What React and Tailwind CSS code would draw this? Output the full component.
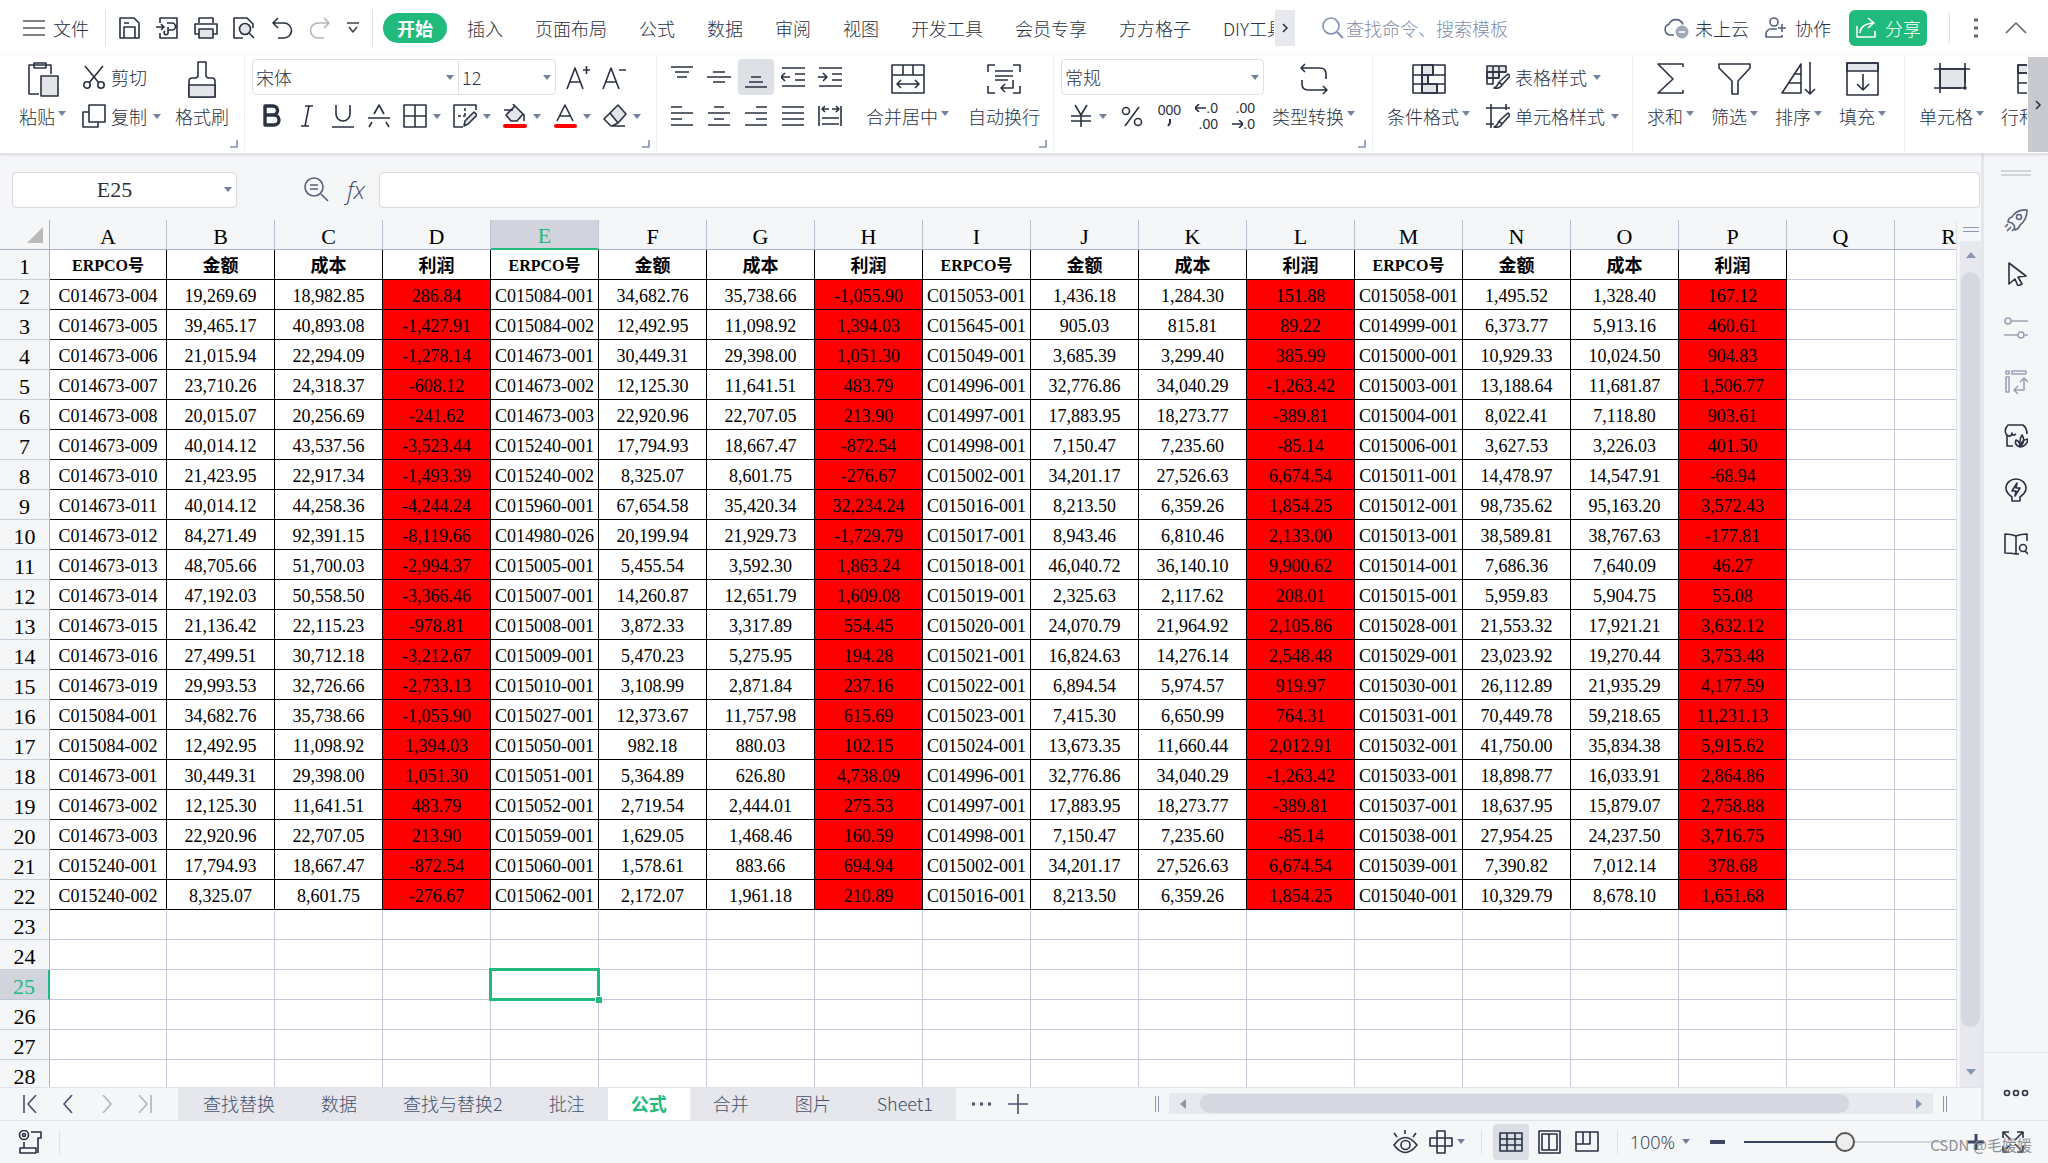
import React from 'react';
import clsx from 'clsx';

const COLUMNS = 'ABCDEFGHIJKLMNOPQR'.split('');
const HEADINGS = ['ERPCO号', '金额', '成本', '利润'];
const ROW_COUNT = 28;
const ACTIVE_COL = 4;
const ACTIVE_ROW = 25;

const SHEET = `
C014673-004 19,269.69 18,982.85 286.84 C015084-001 34,682.76 35,738.66 -1,055.90 C015053-001 1,436.18 1,284.30 151.88 C015058-001 1,495.52 1,328.40 167.12
C014673-005 39,465.17 40,893.08 -1,427.91 C015084-002 12,492.95 11,098.92 1,394.03 C015645-001 905.03 815.81 89.22 C014999-001 6,373.77 5,913.16 460.61
C014673-006 21,015.94 22,294.09 -1,278.14 C014673-001 30,449.31 29,398.00 1,051.30 C015049-001 3,685.39 3,299.40 385.99 C015000-001 10,929.33 10,024.50 904.83
C014673-007 23,710.26 24,318.37 -608.12 C014673-002 12,125.30 11,641.51 483.79 C014996-001 32,776.86 34,040.29 -1,263.42 C015003-001 13,188.64 11,681.87 1,506.77
C014673-008 20,015.07 20,256.69 -241.62 C014673-003 22,920.96 22,707.05 213.90 C014997-001 17,883.95 18,273.77 -389.81 C015004-001 8,022.41 7,118.80 903.61
C014673-009 40,014.12 43,537.56 -3,523.44 C015240-001 17,794.93 18,667.47 -872.54 C014998-001 7,150.47 7,235.60 -85.14 C015006-001 3,627.53 3,226.03 401.50
C014673-010 21,423.95 22,917.34 -1,493.39 C015240-002 8,325.07 8,601.75 -276.67 C015002-001 34,201.17 27,526.63 6,674.54 C015011-001 14,478.97 14,547.91 -68.94
C014673-011 40,014.12 44,258.36 -4,244.24 C015960-001 67,654.58 35,420.34 32,234.24 C015016-001 8,213.50 6,359.26 1,854.25 C015012-001 98,735.62 95,163.20 3,572.43
C014673-012 84,271.49 92,391.15 -8,119.66 C014980-026 20,199.94 21,929.73 -1,729.79 C015017-001 8,943.46 6,810.46 2,133.00 C015013-001 38,589.81 38,767.63 -177.81
C014673-013 48,705.66 51,700.03 -2,994.37 C015005-001 5,455.54 3,592.30 1,863.24 C015018-001 46,040.72 36,140.10 9,900.62 C015014-001 7,686.36 7,640.09 46.27
C014673-014 47,192.03 50,558.50 -3,366.46 C015007-001 14,260.87 12,651.79 1,609.08 C015019-001 2,325.63 2,117.62 208.01 C015015-001 5,959.83 5,904.75 55.08
C014673-015 21,136.42 22,115.23 -978.81 C015008-001 3,872.33 3,317.89 554.45 C015020-001 24,070.79 21,964.92 2,105.86 C015028-001 21,553.32 17,921.21 3,632.12
C014673-016 27,499.51 30,712.18 -3,212.67 C015009-001 5,470.23 5,275.95 194.28 C015021-001 16,824.63 14,276.14 2,548.48 C015029-001 23,023.92 19,270.44 3,753.48
C014673-019 29,993.53 32,726.66 -2,733.13 C015010-001 3,108.99 2,871.84 237.16 C015022-001 6,894.54 5,974.57 919.97 C015030-001 26,112.89 21,935.29 4,177.59
C015084-001 34,682.76 35,738.66 -1,055.90 C015027-001 12,373.67 11,757.98 615.69 C015023-001 7,415.30 6,650.99 764.31 C015031-001 70,449.78 59,218.65 11,231.13
C015084-002 12,492.95 11,098.92 1,394.03 C015050-001 982.18 880.03 102.15 C015024-001 13,673.35 11,660.44 2,012.91 C015032-001 41,750.00 35,834.38 5,915.62
C014673-001 30,449.31 29,398.00 1,051.30 C015051-001 5,364.89 626.80 4,738.09 C014996-001 32,776.86 34,040.29 -1,263.42 C015033-001 18,898.77 16,033.91 2,864.86
C014673-002 12,125.30 11,641.51 483.79 C015052-001 2,719.54 2,444.01 275.53 C014997-001 17,883.95 18,273.77 -389.81 C015037-001 18,637.95 15,879.07 2,758.88
C014673-003 22,920.96 22,707.05 213.90 C015059-001 1,629.05 1,468.46 160.59 C014998-001 7,150.47 7,235.60 -85.14 C015038-001 27,954.25 24,237.50 3,716.75
C015240-001 17,794.93 18,667.47 -872.54 C015060-001 1,578.61 883.66 694.94 C015002-001 34,201.17 27,526.63 6,674.54 C015039-001 7,390.82 7,012.14 378.68
C015240-002 8,325.07 8,601.75 -276.67 C015062-001 2,172.07 1,961.18 210.89 C015016-001 8,213.50 6,359.26 1,854.25 C015040-001 10,329.79 8,678.10 1,651.68
`.trim().split('\n').map((line) => line.split(' '));

const MENUS = ['插入', '页面布局', '公式', '数据', '审阅', '视图', '开发工具', '会员专享', '方方格子', 'DIY工具箱'];
const SHEETS = ['查找替换', '数据', '查找与替换2', '批注', '公式', '合并', '图片', 'Sheet1'];

const Icon = ({ w = 24, h = 24, className, children }) => (
  <svg
    width={w}
    height={h}
    viewBox={`0 0 ${w} ${h}`}
    fill="none"
    stroke="currentColor"
    strokeWidth="1.6"
    strokeLinejoin="round"
    className={clsx('shrink-0', className)}
    aria-hidden="true"
  >
    {children}
  </svg>
);

const Caret = ({ className }) => (
  <svg width="8" height="5" viewBox="0 0 8 5" className={clsx('shrink-0 fill-[#71809c]', className)} aria-hidden="true">
    <path d="M0 0h8L4 5z" />
  </svg>
);

/* ---------- icons ---------- */

const icons = {
  menu: <Icon w={22} h={16}><path d="M0 1h22M0 8h22M0 15h22" stroke="#555" /></Icon>,
  save: <Icon><path d="M2 2h14l5 5v15H2zM6 22V11h11v11M6 7h5" /></Icon>,
  exportFile: <Icon><path d="M4 7V2h17v20H4v-5M0 11h8M5 8l3 3-3 3M11 7h5a3 3 0 0 1 0 7h-4M12 11v5a2 2 0 1 1-3-1" /></Icon>,
  print: <Icon><path d="M5 7V2h14v5M5 18H1V8h22v10h-4" /><path d="M5 13h14v9H5z" fill="#e3e5e8" /></Icon>,
  preview: <Icon><path d="M11 22H2V2h13l6 6v4" /><circle cx="13" cy="13" r="5.5" fill="#e3e5e8" /><path d="M17 17l5 5" /></Icon>,
  undo: <Icon><path d="M8 2L3 7l5 5M3 7h11a7 7 0 0 1 0 15H8" /></Icon>,
  redo: <Icon><path d="M16 2l5 5-5 5M21 7H10a7 7 0 0 0 0 15h6" stroke="#b4b4b4" /></Icon>,
  more: <Icon w={14} h={12}><path d="M1 1h12M3 5l4 5 4-5" stroke="#444" /></Icon>,
  search: <Icon w={22} h={22}><circle cx="9" cy="9" r="8" stroke="#8290b4" /><path d="M15 15l6 6" stroke="#8290b4" strokeWidth="2" /></Icon>,
  cloud: (
    <Icon w={25} h={24}>
      <path d="M10 19H6a5.500 5.500 0 0 1-1-10.700A7.500 7.500 0 0 1 19 8.500" stroke="#55607a" />
      <circle cx="18" cy="16" r="6.500" fill="#a0a8ba" stroke="none" />
      <path d="M15 16h6" stroke="#fff" />
    </Icon>
  ),
  person: <Icon w={22} h={24} className="text-[#55607a]"><circle cx="9" cy="6" r="4" /><path d="M12 13H6a5 5 0 0 0-5 5v3h16v-2M13 12h8M17 8v8" /></Icon>,
  share: <Icon w={22} h={24} className="text-white"><path d="M2 10v11h18v-6M5 17c0-6 4-9 13-10M13 2l6 5-6 5" /></Icon>,
  dots: <Icon w={4} h={20}><path d="M0 2h4M0 10h4M0 18h4" strokeWidth="3" stroke="#666" /></Icon>,
  up: <Icon w={22} h={12}><path d="M1 11L11 1l10 10" stroke="#666" /></Icon>,
  paste: <Icon w={34} h={38}><path d="M13 34H3V5h22v9M8 3h12v5H8z" /><path d="M15 16h17v20H15z" fill="#e3e5e8" /></Icon>,
  cut: <Icon><path d="M3 1l14 17M21 1L7 18" /><circle cx="5" cy="20" r="3.200" /><circle cx="19" cy="20" r="3.200" /></Icon>,
  copy: <Icon><path d="M7 1h16v17H7zM7 8H1v15h15v-5" /></Icon>,
  brush: <Icon w={30} h={38}><path d="M11 2h8v13q0 3 3 3h3q3 0 3 3v16H2V21q0-3 3-3h3q3 0 3-3z" /><path d="M2 25h26v12H2z" fill="#e3e5e8" /></Icon>,
  fontUp: <Icon><path d="M1 24L9 3l8 21M4 17h10M17 5h7M20.500 1v8" /></Icon>,
  fontDown: <Icon><path d="M1 24L9 3l8 21M4 17h10M17 5h7" /></Icon>,
  bold: <Icon><path d="M6 2h8a4.500 4.500 0 0 1 0 9H6zM6 11h9a5 5 0 0 1 0 10H6z" strokeWidth="3.400" /></Icon>,
  italic: <Icon><path d="M10 2h8M6 22h8M14 2l-4 20" /></Icon>,
  underline: <Icon><path d="M5 1v9a7 7 0 0 0 14 0V1M1 23h22" /></Icon>,
  strike: <Icon><path d="M7 10l5-9 5 9M1 14h22M5 18l-3 5M19 18l3 5" /></Icon>,
  borders: <Icon><path d="M1 1h22v22H1zM12 1v22M1 12h22" /></Icon>,
  drawBorder: <Icon><path d="M10 23H1V1h22v5" /><path d="M5 12h7M12 4v8" strokeDasharray="3 2" /><path d="M11 22l1-5 9-9 3 3-9 9z" fill="#e3e5e8" /></Icon>,
  fill: <Icon><path d="M3 11l9-9 8 8-6 7H8z" fill="#e3e5e8" /><path d="M12 2L10 0M1 6h9M21 10v7" /><path d="M2 22h20" stroke="#f00" strokeWidth="4" strokeLinecap="round" /></Icon>,
  fontColor: <Icon><path d="M4 17L12 1l8 16M7 12h10" /><path d="M3 22h19" stroke="#f00" strokeWidth="4" strokeLinecap="round" /></Icon>,
  eraser: <Icon><path d="M7 9l8-8 8 9-8 9z" fill="#e3e5e8" /><path d="M7 9l-6 6 7 7h14M9 22l6-3" /></Icon>,
  alignTop: <Icon><path d="M1 2h22M5 7h14M7 12h10" /></Icon>,
  alignMiddle: <Icon><path d="M6 7h12M0 12h24M6 17h12" /></Icon>,
  alignBottom: <Icon><path d="M7 12h10M5 17h14M1 22h22" /></Icon>,
  outdent: <Icon><path d="M1 3h23M14 9h10M14 15h10M1 21h23M0 12h9M4 8l-4 4 4 4" /></Icon>,
  indent: <Icon><path d="M1 3h23M14 9h10M14 15h10M1 21h23M0 12h8M5 8l4 4-4 4" /></Icon>,
  left: <Icon><path d="M1 3h11M1 9h22M1 15h11M1 21h22" /></Icon>,
  center: <Icon><path d="M7 3h10M1 9h22M7 15h10M1 21h22" /></Icon>,
  right: <Icon><path d="M12 3h11M1 9h22M12 15h11M1 21h22" /></Icon>,
  justify: <Icon><path d="M1 3h22M1 9h22M1 15h22M1 21h22" /></Icon>,
  distribute: <Icon><path d="M1 2v20M23 2v20M4 14h17M4 20h17M4 5h7M14 5h7M7 2L4 5l3 3M18 2l3 3-3 3" /></Icon>,
  merge: <Icon w={34} h={30}><path d="M1 1h32v28H1zM1 11h32M12 1v10M22 1v10M6 20h22M10 16l-4 4 4 4M24 16l4 4-4 4" /></Icon>,
  wrap: <Icon w={34} h={30}><path d="M8 1H1v7M26 1h7v7M8 29H1v-7M26 29h7v-7M8 7h18M8 12h18M8 16h13M26 16v8H14M18 20l-4 4 4 4" /></Icon>,
  yen: <Icon><path d="M6 1l6 10 6-10M2 12h20M2 17h20M12 11v12" /></Icon>,
  percent: <Icon><circle cx="6" cy="7" r="3.500" /><circle cx="18" cy="18" r="3.500" /><path d="M19 3L5 22" /></Icon>,
  convert: <Icon w={30} h={34}><path d="M6 2L2 6l4 4M2 6h19q6 0 6 6v5M24 24l4 4-4 4M28 28H9q-6 0-6-6v-4" /></Icon>,
  condFormat: (
    <Icon w={34} h={30}>
      <path d="M10 1h11v10H10zM10 11h6v9h-6zM10 20h15v9H10z" fill="#e3e5e8" />
      <path d="M1 1h32v28H1zM1 11h32M1 20h32M10 1v28M21 1v10M16 11v9M25 20v9" />
    </Icon>
  ),
  tableStyle: (
    <Icon>
      <path d="M1 1h19v6H1zM1 7h12v6H1z" fill="#e3e5e8" />
      <path d="M20 7H1v12h6V1M13 1v12M1 13h12" />
      <path d="M13 17l9-8 2 2-8 9M13 17l3 3q-2 4-8 3 3-1 5-6" fill="#fff" />
    </Icon>
  ),
  cellStyle: (
    <Icon>
      <path d="M5 0v24M0 4h24M20 0v6M0 20h8" />
      <path d="M13 17l9-8 2 2-8 9M13 17l3 3q-2 4-8 3 3-1 5-6" fill="#fff" />
    </Icon>
  ),
  sum: <Icon w={30} h={34}><path d="M27 5V2H2l15 15L2 31h25v-3" /></Icon>,
  filter: <Icon w={34} h={34}><path d="M1 2h31v4L20 19v13h-6V19L1 6z" /></Icon>,
  sort: <Icon w={36} h={34}><path d="M20 2v29H1zM14 12h6M8 21h12M29 0v32M24 27l5 5 5-5" /></Icon>,
  fillDown: <Icon w={34} h={34}><path d="M1 1h31v8H1z" fill="#e3e5e8" /><path d="M1 1h31v32H1zM17 12v16M11 22l6 6 6-6" /></Icon>,
  cells: <Icon w={36} h={32}><path d="M6 6h25v19H6z" fill="#e3e5e8" /><path d="M6 0v30M0 6h36M31 0v20M0 25h27" /><circle cx="31" cy="25" r="1" /></Icon>,
  rowsCols: <Icon w={34} h={30}><path d="M1 1h32v8H1z" fill="#e3e5e8" /><path d="M1 1h32v28H1zM1 9h32M1 19h32" /></Icon>,
  zoomText: <Icon w={26} h={26} className="text-[#55607a]"><circle cx="10" cy="10" r="9" /><path d="M17 17l7 7M6 8h8M6 12h8" /></Icon>,
};

const sideIcons = [
  ['图钉', <Icon key="r" className="text-[#59657f]"><path d="M4 14q0-4 4-5 5-8 15-7 0 10-7 15-1 4-5 5l-1-5-2-2zM1 19l3-3M3 23l4-4M8 23l2-2" /><circle cx="15" cy="9" r="2.500" /></Icon>],
  ['选择', <Icon key="c"><path d="M5 1l17 13-8 1 4 7-4 2-3-7-6 5z" /></Icon>],
  ['设置', <Icon key="s" className="text-[#9aa3b5]"><circle cx="4" cy="5" r="3" /><circle cx="17" cy="19" r="3" /><path d="M7 5h17M0 19h14M20 19h4" /></Icon>],
  ['透视', <Icon key="p" className="text-[#9aa3b5]"><path d="M2 1h3v3H2zM8 1h14v3H8zM2 7h3v15H2zM20 9v11h-9M16 12l4-4 4 4M14 16l-4 4 4 4" /></Icon>],
  ['商店', <Icon key="h"><path d="M9 22H3V12q-4-6 1-11h15q4 3 4 9M3 11q4 3 5-2 0 4 4 1" /><path d="M16 23q-6-2-4-7 4 1 4 7zM16 23q1-7 8-8-1 7-8 8zM16 23q-1-8 2-12 4 6-2 12z" fill="#f5f6f8" /></Icon>],
  ['灵感', <Icon key="b"><path d="M8 23v-4q-6-4-6-9a10 9 0 0 1 20 0q0 5-6 9v4zM13 5l-5 8h4l-1 5 5-8h-4z" /></Icon>],
  ['查阅', <Icon key="k"><path d="M12 4v18M12 4Q7 2 1 2v19q6 0 11 1M12 4q5-2 11-2v7M12 22h3" /><circle cx="19" cy="16" r="3.500" /><path d="M21 19l3 3" /></Icon>],
];

/* ---------- top menu ---------- */

function MenuBar() {
  return (
    <header className="flex h-14 shrink-0 items-center pb-px">
      <button className="flex items-center gap-2 pl-[23px]">{icons.menu}文件</button>
      <div className="ml-4 flex h-9 items-center gap-[14px] border-l border-[#e0e2e6] pl-[12px] pr-3">
        {['save', 'exportFile', 'print', 'preview', 'undo', 'redo', 'more'].map((name) => (
          <button key={name} aria-label={name}>{icons[name]}</button>
        ))}
      </div>
      <nav className="flex h-9 min-w-0 max-w-[902px] flex-1 items-center overflow-hidden border-l border-[#e0e2e6] pl-[10px]">
        <button className="h-[30px] shrink-0 rounded-full bg-[#21ba7d] px-[14px] font-bold text-white">开始</button>
        <div className="ml-5 flex gap-8">
          {MENUS.map((name) => (
            <button key={name} className="shrink-0 whitespace-nowrap">{name}</button>
          ))}
        </div>
      </nav>
      <button aria-label="更多选项卡" className="ml-px flex h-9 w-5 shrink-0 items-center justify-center bg-[#e7e9ee]">
        <Icon w={6} h={10}><path d="M1 1l4 4-4 4" /></Icon>
      </button>
      <label className="ml-[27px] flex items-center gap-[2px]">
        {icons.search}
        <input aria-label="搜索" className="w-[200px] font-light outline-none placeholder:text-[#7f8cab]" placeholder="查找命令、搜索模板" />
      </label>
      <div className="ml-auto flex shrink-0 items-center">
        <button className="flex items-center gap-[6px]">{icons.cloud}未上云</button>
        <button className="ml-4 flex items-center gap-2">{icons.person}协作</button>
        <button className="ml-[18px] flex h-9 items-center gap-2 rounded-md bg-[#21ba7d] px-[6px] text-white">{icons.share}分享</button>
        <div className="ml-[22px] flex h-[30px] items-center gap-[27px] border-l border-[#e0e2e6] pl-6 pr-[21px]">
          <button aria-label="更多">{icons.dots}</button>
          <button aria-label="收起">{icons.up}</button>
        </div>
      </div>
    </header>
  );
}

/* ---------- ribbon ---------- */

const Group = ({ className, launcher, children }) => (
  <section className={clsx('flex h-[95px] shrink-0 flex-col border-r border-[#eceef1]', className)}>
    <div className="flex h-[78px]">{children}</div>
    {launcher && (
      <button aria-label="展开" className="mt-[6px] self-end pr-[6px]">
        <Icon w={8} h={8}><path d="M7 0v7H0" stroke="#8290b4" /></Icon>
      </button>
    )}
  </section>
);

const BigButton = ({ icon, label, caret = true }) => (
  <button className="flex shrink-0 flex-col items-center">
    <span className="flex h-[46px] items-center">{icons[icon]}</span>
    <span className="flex h-7 items-center whitespace-nowrap">
      {label}
      {caret && <Caret className="mb-[6px] ml-[3px]" />}
    </span>
  </button>
);

const SmallButton = ({ icon, label, caret }) => (
  <button className="flex h-9 items-center whitespace-nowrap">
    {icons[icon]}
    <span className="ml-[5px]">{label}</span>
    {caret && <Caret className="ml-[6px]" />}
  </button>
);

const Tool = ({ icon, caret }) => (
  <button aria-label={icon} className="flex items-center gap-[6px]">
    {icons[icon]}
    {caret && <Caret />}
  </button>
);

const Cell = ({ icon, active }) => (
  <button aria-label={icon} className={clsx('flex size-9 items-center justify-center rounded', active && 'bg-[#dde1e6]')}>
    {icons[icon]}
  </button>
);

const Select = ({ label, value, className }) => (
  <label className={clsx('flex h-9 items-center border border-[#dfe1e5] pr-[4px]', className)}>
    <select aria-label={label} className="min-w-0 flex-1 appearance-none pl-[3px] outline-none">
      <option>{value}</option>
    </select>
    <Caret />
  </label>
);

const decimalClass = "flex w-6 flex-col items-end font-['Liberation_Sans',sans-serif] text-sm font-normal leading-4";

function Ribbon() {
  return (
    <div className="relative z-10 flex h-[98px] shrink-0 items-start border-b border-[#e2e4e7] shadow-sm">
      <div className="flex min-w-0 flex-1 overflow-hidden">
        <Group className="w-[245px] pl-[19px]" launcher>
          <BigButton icon="paste" label="粘贴" />
          <div className="ml-4 flex flex-col gap-[3px] pt-[3px]">
            <SmallButton icon="cut" label="剪切" />
            <SmallButton icon="copy" label="复制" caret />
          </div>
          <div className="ml-[14px] flex">
            <BigButton icon="brush" label="格式刷" caret={false} />
          </div>
        </Group>

        <Group className="w-[412px] pl-[7px]" launcher>
          <div className="flex flex-col gap-[3px] pt-[3px]">
            <div className="flex items-center">
              <Select label="字体" value="宋体" className="w-[207px] rounded-l" />
              <Select label="字号" value="12" className="-ml-px w-[98px] rounded-r" />
              <div className="ml-[10px] flex gap-3">
                <Tool icon="fontUp" />
                <Tool icon="fontDown" />
              </div>
            </div>
            <div className="flex h-9 items-center gap-3 pl-[7px]">
              <Tool icon="bold" />
              <Tool icon="italic" />
              <Tool icon="underline" />
              <Tool icon="strike" />
              <Tool icon="borders" caret />
              <Tool icon="drawBorder" caret />
              <Tool icon="fill" caret />
              <Tool icon="fontColor" caret />
              <Tool icon="eraser" caret />
            </div>
          </div>
        </Group>

        <Group className="w-[397px] pl-[7px]" launcher>
          <div className="grid grid-cols-5 content-start gap-x-px gap-y-[3px] pt-[3px]">
            {['alignTop', 'alignMiddle', 'alignBottom', 'outdent', 'indent', 'left', 'center', 'right', 'justify', 'distribute'].map((name) => (
              <Cell key={name} icon={name} active={name === 'alignBottom'} />
            ))}
          </div>
          <div className="ml-[18px] flex gap-[19px]">
            <BigButton icon="merge" label="合并居中" />
            <BigButton icon="wrap" label="自动换行" caret={false} />
          </div>
        </Group>

        <Group className="w-[319px] pl-[7px]" launcher>
          <div className="flex flex-col gap-[3px] pt-[3px]">
            <Select label="数字格式" value="常规" className="w-[203px] rounded" />
            <div className="flex h-9 items-center gap-[13px] pl-2">
              <Tool icon="yen" caret />
              <Tool icon="percent" />
              <button aria-label="千位分隔" className={decimalClass}>
                <span>000</span>
                <Icon w={14} h={12}><path d="M3 1v4l-2 3" strokeWidth="2" /></Icon>
              </button>
              <button aria-label="增加小数位" className={decimalClass}>
                <span className="flex items-center"><Icon w={11} h={8}><path d="M0 4h11M4 0L0 4l4 4" /></Icon>.0</span>
                <span>.00</span>
              </button>
              <button aria-label="减少小数位" className={decimalClass}>
                <span>.00</span>
                <span className="flex items-center"><Icon w={11} h={8}><path d="M0 4h10M7 0l4 4-4 4" /></Icon>.0</span>
              </button>
            </div>
          </div>
          <div className="ml-2 flex">
            <BigButton icon="convert" label="类型转换" />
          </div>
        </Group>

        <Group className="w-[260px] pl-[14px]">
          <BigButton icon="condFormat" label="条件格式" />
          <div className="ml-4 flex flex-col gap-[3px] pt-[3px]">
            <SmallButton icon="tableStyle" label="表格样式" caret />
            <SmallButton icon="cellStyle" label="单元格样式" caret />
          </div>
        </Group>

        <Group className="w-[272px] pl-[14px]">
          <div className="flex gap-[17px]">
            <BigButton icon="sum" label="求和" />
            <BigButton icon="filter" label="筛选" />
            <BigButton icon="sort" label="排序" />
            <BigButton icon="fillDown" label="填充" />
          </div>
        </Group>

        <Group className="pl-[14px]">
          <div className="flex gap-[17px]">
            <BigButton icon="cells" label="单元格" />
            <BigButton icon="rowsCols" label="行和列" />
          </div>
        </Group>
      </div>
      <button aria-label="更多命令" className="ml-px mt-px flex h-[95px] w-5 shrink-0 items-center justify-center bg-[#c8cacf]">
        <Icon w={6} h={10}><path d="M1 1l4 4-4 4" /></Icon>
      </button>
    </div>
  );
}

/* ---------- sheet ---------- */

function FormulaBar() {
  return (
    <div className="flex h-[66px] shrink-0 items-center pl-3 pr-[1px] pt-[5px]">
      <label className="flex h-9 w-[225px] shrink-0 items-center rounded border border-[#d7d9de] bg-white pr-[4px]">
        <input aria-label="名称框" defaultValue="E25" className="min-w-0 flex-1 pr-2 text-center font-['Liberation_Serif',serif] text-[22px] outline-none" />
        <Caret />
      </label>
      <button aria-label="查找" className="ml-[67px]">{icons.zoomText}</button>
      <button className="ml-3 w-7 font-['Open_Sans','Noto_Sans',sans-serif] text-2xl font-light italic leading-none text-[#3f4b66]">fx</button>
      <input aria-label="编辑栏" className="ml-[9px] h-9 min-w-0 flex-1 rounded border border-[#d7d9de] bg-white px-2 outline-none" />
    </div>
  );
}

function cellValue(row, col) {
  if (col > 15 || row > 22) return '';
  return row === 1 ? HEADINGS[col % 4] : SHEET[row - 2][col];
}

function Grid() {
  return (
    <div className="min-h-0 min-w-0 flex-1 overflow-hidden">
      <table className="w-[2003px] table-fixed border-separate border-spacing-0 font-['Liberation_Serif','Noto_Sans_CJK_SC',serif] font-normal text-black">
        <colgroup>
          <col className="w-[50px]" />
          <col className="w-[117px]" />
          {COLUMNS.slice(1).map((c) => <col key={c} className="w-[108px]" />)}
        </colgroup>
        <thead>
          <tr className="h-[30px] text-[22px] leading-6">
            <th className="border-b border-r border-[#a9b1c6] bg-[#f5f6f8] p-0">
              <svg width="16" height="16" className="ml-auto mr-[6px]" aria-hidden="true"><path d="M16 0v16H0z" fill="#b9b9b9" /></svg>
            </th>
            {COLUMNS.map((c, i) => (
              <th
                key={c}
                className={clsx(
                  'p-0 pt-1 font-normal',
                  i === ACTIVE_COL
                    ? 'border-b-2 border-r border-b-[#21ba7d] border-r-[#c0c5d3] bg-[#d1d4dc] text-[#21ba7d]'
                    : 'border-b border-r border-b-[#a9b1c6] border-r-[#b9c0d0] bg-[#f5f6f8]',
                )}
              >
                {c}
              </th>
            ))}
          </tr>
        </thead>
        <tbody>
          {Array.from({ length: ROW_COUNT }, (_, r) => r + 1).map((row) => (
            <tr key={row} className="h-[30px] text-lg leading-6">
              <th
                className={clsx(
                  'p-0 pt-1 text-[22px] font-normal leading-6',
                  row === ACTIVE_ROW
                    ? 'border-b border-r-2 border-b-[#c0c5d3] border-r-[#21ba7d] bg-[#d1d4dc] text-[#21ba7d]'
                    : 'border-b border-r border-b-[#c9cedb] border-r-[#a9b1c6] bg-[#f5f6f8]',
                )}
              >
                {row}
              </th>
              {COLUMNS.map((c, col) => {
                const filled = col < 16 && row <= 22;
                return (
                  <td
                    key={c}
                    className={clsx(
                      'whitespace-nowrap border-b border-r p-0 pt-[2px] text-center',
                      filled ? 'border-black' : 'border-[#c3c9d9]',
                      filled && row > 1 && col % 4 === 3 ? 'bg-[#ff0000]' : 'bg-white',
                      row === 1 && 'font-bold',
                      row === 1 && col % 4 === 0 && 'text-base',
                      row === ACTIVE_ROW && col === ACTIVE_COL && 'relative',
                    )}
                  >
                    {cellValue(row, col)}
                    {row === ACTIVE_ROW && col === ACTIVE_COL && (
                      <>
                        <span className="absolute -inset-0.5 border-[3px] border-[#21ba7d]" />
                        <span className="absolute -bottom-1 -right-1 size-[7px] border-l border-t border-white bg-[#21ba7d]" />
                      </>
                    )}
                  </td>
                );
              })}
            </tr>
          ))}
        </tbody>
      </table>
    </div>
  );
}

function VerticalScroll() {
  return (
    <div className="flex w-[25px] shrink-0 flex-col items-end border-l border-[#e2e4ea]">
      <div className="flex h-[21px] w-[21px] flex-col items-center gap-[3px] pt-[7px]">
        <span className="h-px w-4 bg-[#8a97b1]" />
        <span className="h-px w-4 bg-[#8a97b1]" />
      </div>
      <div className="flex w-[21px] flex-1 flex-col items-center bg-[#e8e9ef]">
        <svg width="10" height="6" className="mt-[11px]" aria-hidden="true"><path d="M5 0l5 6H0z" fill="#8a97b1" /></svg>
        <div className="mt-[14px] w-[19px] flex-1 rounded-full bg-[#d5d8e0]" />
        <svg width="10" height="6" className="mb-3 mt-[42px]" aria-hidden="true"><path d="M0 0h10L5 6z" fill="#8a97b1" /></svg>
      </div>
    </div>
  );
}

function SheetTabs() {
  return (
    <div className="flex h-[34px] shrink-0 items-center border-y border-[#e0e2e8] text-[#46516b]">
      <div className="flex w-[178px] shrink-0 items-center gap-[25px] pb-px pl-[23px]">
        <button aria-label="第一张"><Icon w={14} h={18}><path d="M1 0v18M13 0L5 9l8 9" /></Icon></button>
        <button aria-label="上一张"><Icon w={12} h={18}><path d="M10 0L2 9l8 9" /></Icon></button>
        <button aria-label="下一张" className="ml-0.5"><Icon w={12} h={18} className="text-[#b3b6bd]"><path d="M2 0l8 9-8 9" /></Icon></button>
        <button aria-label="最后一张"><Icon w={14} h={18} className="text-[#b3b6bd]"><path d="M13 0v18M1 0l8 9-8 9" /></Icon></button>
      </div>
      <div role="tablist" className="flex h-8 shrink-0 bg-[#e5e7ec] pl-0.5">
        {SHEETS.map((name) => (
          <button
            key={name}
            role="tab"
            aria-selected={name === '公式'}
            className={clsx('px-[23px] pb-0.5', name === '公式' && 'bg-white font-bold text-[#21ba7d]')}
          >
            {name}
          </button>
        ))}
      </div>
      <button aria-label="更多工作表" className="ml-4">
        <Icon w={20} h={4}><path d="M0 2h3M8 2h3M16 2h3" strokeWidth="3" /></Icon>
      </button>
      <button aria-label="新建工作表" className="ml-4">
        <Icon w={20} h={20}><path d="M10 0v20M0 10h20" /></Icon>
      </button>
      <div className="ml-auto flex w-[826px] items-center gap-[10px] pb-px pr-[34px]">
        <span className="h-4 w-1 border-x border-[#8a97b1]" />
        <div className="flex h-[21px] flex-1 items-center bg-[#e8e9ef] px-[11px]">
          <svg width="6" height="10" aria-hidden="true"><path d="M6 0v10L0 5z" fill="#8a97b1" /></svg>
          <div className="ml-[14px] mr-[67px] h-[19px] flex-1 rounded-full bg-[#d5d8e0]" />
          <svg width="6" height="10" aria-hidden="true"><path d="M0 0v10l6-5z" fill="#8a97b1" /></svg>
        </div>
        <span className="h-4 w-1 border-x border-[#8a97b1]" />
      </div>
    </div>
  );
}

function SideBar() {
  return (
    <aside className="flex w-[67px] shrink-0 flex-col items-center border-b border-l-[3px] border-b-[#e0e2e8] border-l-[#e4e6ec] pt-4">
      <span className="h-[6px] w-[30px] border-y-2 border-[#d3d5d8]" />
      <div className="mt-[32px] flex flex-col gap-[30px]">
        {sideIcons.map(([name, icon]) => (
          <button key={name} aria-label={name}>{icon}</button>
        ))}
      </div>
      <button aria-label="更多面板" className="mt-auto flex w-full justify-center border-t border-[#e4e6ec] pb-[23px] pt-[36px]">
        <Icon w={26} h={8}><circle cx="4" cy="4" r="2.500" /><circle cx="13" cy="4" r="2.500" /><circle cx="22" cy="4" r="2.500" /></Icon>
      </button>
    </aside>
  );
}

function StatusBar() {
  return (
    <footer className="relative flex h-[42px] shrink-0 items-center pb-px pl-[17px] pr-6">
      <div className="flex h-6 w-[43px] items-center border-r border-[#e0e2e8]">
        <Icon w={26}><circle cx="7" cy="5" r="4.500" /><circle cx="7" cy="5" r="1.500" /><path d="M14 2h10v6h-3v15M7 12v6M3 18h16v5H3zM24 2v4" /></Icon>
      </div>
      <div className="ml-auto flex h-6 items-center gap-[11px] border-r border-[#e0e2e8] pr-4">
        <button aria-label="护眼模式"><Icon w={25}><path d="M1 15q11-15 23 0-12 15-23 0zM12 4V0M4 7L1 3M20 7l3-4" /><circle cx="12.500" cy="15" r="4.500" /></Icon></button>
        <button aria-label="阅读模式" className="flex items-center gap-[4px]">
          <Icon><path d="M8 1h8v22H8zM1 8h22v8H1z" /></Icon>
          <Caret />
        </button>
      </div>
      <div className="flex h-6 items-center gap-[2px] border-r border-[#e0e2e8] pl-[11px] pr-3">
        <button aria-label="普通视图" className="flex size-9 items-center justify-center rounded bg-[#d9dee5]">
          <Icon><path d="M1 3h22v18H1zM1 9h22M1 15h22M8 3v18M16 3v18" /></Icon>
        </button>
        <button aria-label="页面布局视图" className="flex size-9 items-center justify-center">
          <Icon><path d="M2 1h21v22H2zM5 4h15v16H5zM12 4v16" /></Icon>
        </button>
        <button aria-label="分页预览" className="flex size-9 items-center justify-center">
          <Icon><path d="M1 2h22v19H1zM1 14h14V2M8 2v12" /></Icon>
        </button>
      </div>
      <button className="ml-3 flex items-center gap-[7px] font-['Open_Sans','Noto_Sans_CJK_SC',sans-serif]">100%<Caret /></button>
      <button aria-label="缩小" className="ml-5"><Icon w={15} h={4}><path d="M0 2h15" strokeWidth="4" stroke="#3a4763" /></Icon></button>
      <input
        type="range"
        aria-label="显示比例"
        defaultValue="50"
        className="ml-[19px] h-5 w-[202px] appearance-none bg-transparent [&::-webkit-slider-runnable-track]:h-0.5 [&::-webkit-slider-runnable-track]:bg-[linear-gradient(90deg,#3a4763_50%,#d3d7e0_50%)] [&::-webkit-slider-thumb]:-mt-[9px] [&::-webkit-slider-thumb]:size-5 [&::-webkit-slider-thumb]:appearance-none [&::-webkit-slider-thumb]:rounded-full [&::-webkit-slider-thumb]:border-2 [&::-webkit-slider-thumb]:border-[#555] [&::-webkit-slider-thumb]:bg-[#eee]"
      />
      <button aria-label="放大" className="ml-[22px]"><Icon w={16} h={16}><path d="M0 8h16M8 0v16" strokeWidth="3" stroke="#3a4763" /></Icon></button>
      <button aria-label="全屏" className="ml-[18px]"><Icon w={22} h={22}><path d="M1 7V1h6M15 1h6v6M21 15v6h-6M7 21H1v-6M1 1l8 8M21 1l-8 8M21 21l-8-8M1 21l8-8" /></Icon></button>
      <span className="absolute right-4 top-3 text-[15px] font-normal leading-6 text-[#8d8f94]">CSDN @毛媛媛</span>
    </footer>
  );
}

export default function App() {
  return (
    <div className="flex h-screen flex-col overflow-hidden bg-[#f5f6f8] font-['Noto_Sans_CJK_SC',sans-serif] text-lg font-light leading-6 text-[#2a3142]">
      <div className="shrink-0 bg-white">
        <MenuBar />
        <Ribbon />
      </div>
      <div className="flex min-h-0 flex-1">
        <main className="flex min-w-0 flex-1 flex-col">
          <FormulaBar />
          <div className="flex min-h-0 flex-1">
            <Grid />
            <VerticalScroll />
          </div>
          <SheetTabs />
        </main>
        <SideBar />
      </div>
      <StatusBar />
    </div>
  );
}
